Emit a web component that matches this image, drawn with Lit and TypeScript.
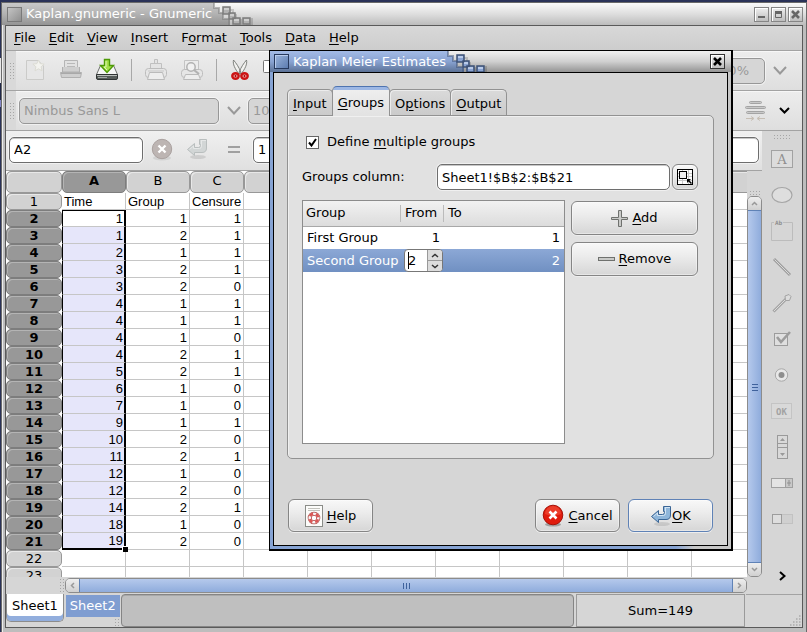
import { LitElement, html, css, svg } from "lit";
import { customElement, state } from "lit/decorators.js";
import { classMap } from "lit/directives/class-map.js";

const COLUMNS = ["A", "B", "C", "", "", "", "", "", "", "", ""];
const ROWS: string[][] = [
  ["Time", "Group", "Censure"],
  ["1", "1", "1"], ["1", "2", "1"], ["2", "1", "1"], ["3", "2", "1"],
  ["3", "2", "0"], ["4", "1", "1"], ["4", "1", "1"], ["4", "1", "0"],
  ["4", "2", "1"], ["5", "2", "1"], ["6", "1", "0"], ["7", "1", "0"],
  ["9", "1", "1"], ["10", "2", "0"], ["11", "2", "1"], ["12", "1", "0"],
  ["12", "2", "0"], ["14", "2", "1"], ["18", "1", "0"], ["19", "2", "0"],
  [], [],
];

const icon = (w: number, h: number, body: unknown) =>
  html`<svg class="icon" width=${w} height=${h} viewBox="0 0 ${w} ${h}" aria-hidden="true">${body}</svg>`;

const chevron = (dir: "up" | "down" | "left" | "right", w: number, h: number, color: string, stroke = 2) => {
  const d = {
    down: `M1 1L${w / 2} ${h - 1.5}L${w - 1} 1`,
    up: `M1 ${h - 1}L${w / 2} 1.5L${w - 1} ${h - 1}`,
    left: `M${w - 1} 1L1.5 ${h / 2}L${w - 1} ${h - 1}`,
    right: `M1 1L${w - 1.5} ${h / 2}L1 ${h - 1}`,
  }[dir];
  return icon(w, h, svg`<path d=${d} fill="none" stroke=${color} stroke-width=${stroke}/>`);
};

const newDoc = icon(24, 24, svg`
  <path d="M3.500 2.500H15L20.500 8V21.500H3.500Z" fill="#e6e6e6" stroke="#cbcbc9"/>
  <path d="M15.500 2l1.600 3.600 4 .5-3 2.700.9 4-3.500-2-3.500 2 .9-4-3-2.700 4-.5z" fill="#f3f3ef" stroke="#dcdcd4"/>`);
const openDoc = icon(24, 24, svg`
  <path d="M5.500 2.500H18.500V13H5.500Z" fill="#e2e2e2" stroke="#b5b5b5"/>
  <path d="M8 5.500h8M8 8.500h8M8 11.500h8" stroke="#b9b9b9"/>
  <path d="M3.500 9v5h17V9M1.500 14.500h21l-1 5h-19z" fill="#cfcfcf" stroke="#b0b0b0"/>
  <path d="M2 15.500h20" stroke="#a9a9a9"/>`);
const saveIcon = icon(24, 24, svg`
  <path d="M5.500 7.500H18.500L22.500 16.500H1.500Z" fill="#f5f5f5" stroke="#6c6f6c"/>
  <path d="M1.500 16.500H22.500V20q0 1.500-1.500 1.500H3q-1.500 0-1.500-1.500Z" fill="#565c5a" stroke="#2f3333"/>
  <path d="M2 17.500h20" stroke="#b9bdba"/>
  <path d="M3 19.500h9" stroke="#a4a8a6"/>
  <path d="M9.500 1.500h5v6h4L12 14.500 5.500 7.500h4z" fill="#a5e04a" stroke="#4e9a06" stroke-width="1.400"/>
  <path d="M11 3v6H9l3 3" fill="none" stroke="#dff7b4"/>`);
const printIcon = icon(24, 24, svg`
  <path d="M10.500 1.500h3v4h-3zM6.500 5.500h11v5h-11z" fill="#e4e4e4" stroke="#c0c0c0"/>
  <rect x="1.500" y="10.500" width="21" height="9" rx="3" fill="#e6e6e6" stroke="#bcbcbc"/>
  <path d="M5.500 14.500h13l2 7h-17z" fill="#ededed" stroke="#bababa"/>
  <path d="M4 13h16" stroke="#c8c8c8"/>`);
const previewIcon = icon(24, 24, svg`
  <path d="M4.500 2.500h14v9h-14z" fill="#ececec" stroke="#c4c4c4"/>
  <rect x="1.500" y="11.500" width="21" height="8" rx="3" fill="#e6e6e6" stroke="#bcbcbc"/>
  <path d="M5.500 16.500h13l2 5h-17z" fill="#ededed" stroke="#bababa"/>
  <circle cx="11" cy="9" r="4.200" fill="#f1f1f1" stroke="#b2b2b2" stroke-width="1.500"/>
  <path d="M14 12l5 4" stroke="#b2b2b2" stroke-width="2.200"/>`);
const cutIcon = icon(22, 24, svg`
  <path d="M4.500 2C3.500 6 6 11 10 16l2-1.500C10 9 7 5 4.500 2zM17.500 2c1 4-1.500 9-5.500 14l-2-1.500C12 9 15 5 17.500 2z" fill="#f2f2f0" stroke="#7c7f7b"/>
  <ellipse cx="6.500" cy="18" rx="3.200" ry="2.800" fill="#f3b5b5" stroke="#cc1414" stroke-width="2.400"/>
  <ellipse cx="15.500" cy="18" rx="3.200" ry="2.800" fill="#f3b5b5" stroke="#cc1414" stroke-width="2.400"/>
  <circle cx="6.500" cy="18" r="1" fill="#a40000"/><circle cx="15.500" cy="18" r="1" fill="#a40000"/>`);
const copyIcon = icon(22, 24, svg`<rect x=".5" y="2.500" width="13" height="12" rx="1" fill="#fff" stroke="#777"/><rect x="6.500" y="7.500" width="13" height="13" rx="1" fill="#fff" stroke="#777"/>`);
const mergeIcon = icon(22, 22, svg`
  <g fill="#c9c9c9" stroke="#a4a4a4"><rect x="4.500" y="1.500" width="12" height="2" rx="1"/><rect x=".5" y="6.500" width="20" height="2" rx="1"/><rect x="1.500" y="11.500" width="18" height="2" rx="1"/></g>
  <path d="M1 18.500h7M13 18.500h7M6 16.500l3 2-3 2M15 16.500l-3 2 3 2" fill="none" stroke="#c6beb4"/>`);
const rejectIcon = icon(22, 24, svg`
  <ellipse cx="11" cy="20" rx="9" ry="2.500" fill="#d2d2d2"/>
  <circle cx="11" cy="11" r="9.700" fill="#bdb5b3" stroke="#aaa19f"/>
  <path d="M7.500 7.500l7 7m0-7l-7 7" stroke="#fff" stroke-width="2.400"/>`);
const enterShape = (fill: string, stroke: string, shine: string) => svg`
  <ellipse cx="12" cy="19" rx="8" ry="2" fill="#000" opacity=".1"/>
  <path d="M1.500 11.500L8.500 5.500V9.500H12.500Q14.500 9.500 14.500 7.500V6.500H13.500V1.500H20.500V10Q20.500 14.500 16 14.500H8.500V17.500Z" fill=${fill} stroke=${stroke} stroke-linejoin="round"/>
  <path d="M3.500 11.500L7.500 8v2.500h6q2 0 2-2.500V3M15 2.500h5" fill="none" stroke=${shine}/>`;
const enterGrey = icon(24, 24, enterShape("#d2d6d6", "#b9bebe", "#e6e8e8"));
const enterBlue = icon(22, 22, enterShape("#8fb6da", "#3a6595", "#d3e4f3"));
const cancelRed = icon(22, 24, svg`
  <ellipse cx="11" cy="20.500" rx="8" ry="2" fill="#888" opacity=".7"/>
  <circle cx="11" cy="11" r="9.800" fill="#e01b0c" stroke="#a51208"/>
  <path d="M3 10a8 8 0 0 1 16 0q-8 3-16 0z" fill="#f4553f" opacity=".6"/>
  <path d="M7.500 7.500l7 7m0-7l-7 7" stroke="#fff" stroke-width="2.600"/>`);
const helpIcon = icon(18, 22, svg`
  <rect x=".5" y=".5" width="17" height="21" fill="#fcfcfa" stroke="#8a8c88"/>
  <path d="M3 3.500h12M3 5.500h12" stroke="#c2c2bc"/>
  <circle cx="9" cy="13" r="4.300" fill="#fff" stroke="#b04a48" stroke-width="4"/>
  <circle cx="9" cy="13" r="4.300" fill="none" stroke="#f5f3f3" stroke-width="2.600"/>
  <circle cx="9" cy="13" r="4.300" fill="none" stroke="#dc5654" stroke-width="2.600" stroke-dasharray="3.800 2.955" stroke-dashoffset="-1.480"/>`);
const plusIcon = icon(17, 17, svg`<path d="M7.500.5h3v7h6v2h-6v7h-3v-7h-7v-2h7z" fill="#c9cac8" stroke="#6f716e"/>`);
const minusIcon = icon(17, 6, svg`<rect x=".5" y="1.500" width="16" height="3" fill="#c9cac8" stroke="#6f716e"/>`);
const rangeIcon = icon(16, 16, svg`
  <rect width="16" height="16" fill="#fff"/>
  <path d="M0 4.500h16M0 7.500h16M0 11.500h16M5.500 0v16M11.500 0v16" stroke="#c9c9c9"/>
  <rect x=".5" y=".5" width="15" height="15" fill="none" stroke="#000"/>
  <rect x="2.500" y="2.500" width="7" height="7" fill="#f0f0f0" stroke="#000"/>
  <path d="M10 10h4L10 14z" fill="#000"/><path d="M11.500 11.500l3 3" stroke="#000" stroke-width="1.500"/>`);

const objectTools: [string, unknown][] = [
  ["Label", icon(24, 20, svg`<rect x="1.500" y="1.500" width="21" height="17" fill="#dcdcdc" stroke="#a2a2a2"/><text x="12" y="15" text-anchor="middle" font-family="DejaVu Serif, serif" font-size="13" fill="#8f8f8f">A</text>`)],
  ["Oval", icon(24, 20, svg`<ellipse cx="12" cy="10" rx="10" ry="7.500" fill="#dedede" stroke="#a6a6a6" stroke-width="1.200"/>`)],
  ["Frame", icon(24, 24, svg`<path d="M4 3.500H1.500V21.500H22.500V3.500H13" fill="none" stroke="#bcbcbc"/><text x="5" y="6" font-family="DejaVu Sans Mono, monospace" font-size="6" font-weight="bold" fill="#909090">Ab</text>`)],
  ["Line", icon(24, 20, svg`<path d="M4 2L20 18" stroke="#9e9e9e" stroke-width="3"/><path d="M4.500 2.500L19.500 17.500" stroke="#d9d9d9"/>`)],
  ["Arrow", icon(24, 20, svg`<path d="M3.500 18.500L17 5" stroke="#a4a4a4" stroke-width="3"/><path d="M4 18L17 5" stroke="#dadada"/><path d="M15 3l4-1.500 2 2-1.500 4h-4z" fill="#dcdcdc" stroke="#a4a4a4"/>`)],
  ["Checkbox", icon(24, 20, svg`<rect x="4.500" y="4.500" width="13" height="12" fill="#dfdfdf" stroke="#9c9c9c"/><path d="M7 8l4 5 9-10" fill="none" stroke="#9c9c9c" stroke-width="2.600"/>`)],
  ["Radio button", icon(24, 20, svg`<circle cx="11.500" cy="10" r="6.200" fill="#e8e8e8" stroke="#a8a8a8"/><circle cx="11.500" cy="10" r="3" fill="#8e8e8e"/>`)],
  ["Button", icon(24, 20, svg`<rect x="1.500" y="2.500" width="20" height="15" fill="#d9d9d9" stroke="#c4c4c4"/><text x="11.500" y="14" text-anchor="middle" font-family="DejaVu Sans Mono, monospace" font-size="9" font-weight="bold" fill="#a2a2a2">OK</text>`)],
  ["Scrollbar", icon(24, 26, svg`<rect x="7.500" y="1.500" width="10" height="23" fill="#d9d9d9" stroke="#9a9a9a"/><path d="M7 9.500h11M7 13.500h11" stroke="#9a9a9a"/><path d="M10 7h5l-2.500-3zM10 19h5l-2.500 3z" fill="#9a9a9a"/>`)],
  ["Spin button", icon(24, 20, svg`<rect x="1.500" y="5.500" width="21" height="9" fill="#e4e4e4" stroke="#a0a0a0"/><rect x="15.500" y="5.500" width="7" height="9" fill="#c8c8c8" stroke="#a0a0a0"/><path d="M17 10h4M19 7v6" stroke="#909090"/>`)],
  ["Slider", icon(24, 20, svg`<rect x="2.500" y="5.500" width="20" height="9" fill="#d0d0d0" stroke="#c2c2c2"/><rect x="2.500" y="5.500" width="9" height="9" fill="#dedede" stroke="#9c9c9c"/>`)],
];

/* Stair-step ornament where the caption part of a title bar breaks up into blocks. */
const steps = (h: number, top: string, middle: string, bottom: string, edge: string, shine: string) => html`
  <svg class="steps" width="42" height=${h} viewBox="0 0 42 ${h}" aria-hidden="true">
    <defs><linearGradient id="caption" gradientUnits="userSpaceOnUse" x1="0" y1="0" x2="0" y2=${h}>
      <stop offset="0" stop-color=${top}/><stop offset=".5" stop-color=${middle}/><stop offset="1" stop-color=${bottom}/>
    </linearGradient></defs>
    <path d="M0 0H2V5H7V10H11V16H18V${h}H0Z" fill="url(#caption)"/>
    <path d="M2 0V5H7V10H11V16H17V${h}" fill="none" stroke=${edge} stroke-width="2" opacity=".5"/>
    <path d="M16 7h5v5h3v5h5v5h-6M34 22h6v-7" fill="none" stroke="#000" stroke-width="2" opacity=".15"/>
    <g fill=${middle} stroke=${edge} stroke-width="1.500">
      <path d="M11 4h7v7h-7zM17 10h6v6h-6zM21 15h7v6h-7zM31 15h7v6h-7z"/>
    </g>
    <path d="M12 6h5M18 12h4M22 17h5M32 17h5" stroke=${shine} stroke-width="2" opacity=".8"/>
  </svg>`;

const base = css`
  * { box-sizing: border-box; }
  button, input {
    font: inherit; color: inherit; margin: 0; padding: 0; border: 0; background: none;
    border-radius: 0; outline: 0; min-width: 0;
  }
  button { display: flex; align-items: center; justify-content: center; }
  .icon { display: block; flex: none; }
  u { text-underline-offset: 2px; text-decoration-thickness: 1px; }
  .entry {
    height: 26px; padding: 0 4px; background: #fff; border: 1px solid #6e6e6e; border-radius: 5px;
    box-shadow: inset 0 1px 0 #c8c8c8, 0 0 0 1px rgba(255, 255, 255, .5);
  }
  .win-btn {
    width: 15px; height: 15px; border: 1px solid #858585; box-shadow: inset 1px 1px 0 #fff;
    background: linear-gradient(#eee, #bdbdbd);
  }
`;

@customElement("kaplan-meier-dialog")
export class KaplanMeierDialog extends LitElement {
  static styles = [base, css`
    :host {
      box-sizing: border-box; display: flex; flex-direction: column; background: #d6d6d6;
      border: 1px solid #000; border-right-width: 2px; border-bottom-width: 2px;
    }
    .title {
      display: flex; align-items: center; height: 21px; padding: 0 6px 0 4px;
      background: linear-gradient(#f0f0f0, #d0d0d0 50%, #949494);
    }
    .name {
      display: flex; align-items: center; gap: 4px; height: 21px; margin-left: -4px; padding-left: 4px; color: #fff;
      background: linear-gradient(#a3bbe6, #89a3d2 50%, #5c7296);
    }
    .menu {
      width: 15px; height: 15px; border: 1px solid #26395d; background: linear-gradient(135deg, #9bb4dc, #5c7cb0);
      box-shadow: inset 1px 1px 0 #b9cced;
    }
    .steps { flex: none; }
    .close { margin-left: auto; border-color: #333; }
    .frame { flex: 1; display: flex; padding: 0 3px 3px; background: linear-gradient(90deg, #86a3d3 88%, #c6c6c6 92%); }
    .body {
      flex: 1; display: flex; flex-direction: column; min-width: 0; padding: 13px;
      border: 1px solid #000; background: #d6d6d6;
    }
    .tabs { display: flex; align-items: flex-end; height: 29px; }
    .tab {
      height: 26px; padding: 2px 5px 0; border: 1px solid #929292; border-bottom: 0; margin-right: -1px;
      border-radius: 5px 5px 0 0; background: linear-gradient(#dadada, #cbcbcb); box-shadow: inset 1px 1px 0 #ececec;
    }
    .tab.on {
      position: relative; height: 30px; margin-bottom: -1px; border-top: 1px solid #4f74b0;
      background: linear-gradient(#9db7e4 3px, #eee 3px, #e2e2e2); box-shadow: none;
    }
    .page {
      flex: 1; display: flex; flex-direction: column; padding: 15px 15px 14px 14px;
      background: #e1e1e1; border: 1px solid #929292; border-radius: 0 5px 5px 5px; box-shadow: inset 1px 1px 0 #f0f0f0;
    }
    .check { display: flex; align-items: center; gap: 8px; height: 22px; padding-left: 4px; }
    .check input { appearance: none; width: 13px; height: 13px; border: 1px solid #666; background: #fff; }
    .check input:not(:checked) + .icon { display: none; }
    .box { position: relative; display: flex; }
    .box .icon { position: absolute; left: 2px; top: 2px; pointer-events: none; }
    .column { display: flex; align-items: center; margin-top: 11px; height: 26px; }
    .column label { width: 135px; }
    .column .entry { flex: 1; }
    .btn {
      gap: 4px; border: 1px solid #858585; border-radius: 6px; background: linear-gradient(#f8f8f8, #ececec 40%, #d6d6d6);
      box-shadow: inset 0 0 0 1px rgba(255, 255, 255, .4), 0 1px 0 #eee;
    }
    .pick { width: 26px; height: 26px; margin-left: 2px; }
    .lower { flex: 1; display: flex; gap: 6px; margin-top: 10px; }
    .list { flex: 1; background: #fff; border: 1px solid #8c8c8c; }
    table { width: 100%; border-collapse: collapse; table-layout: fixed; }
    th, td { padding: 0 4px; font-weight: normal; text-align: left; white-space: nowrap; }
    th {
      height: 25px; border-bottom: 1px solid #a8a8a8;
      background: linear-gradient(#bbb, #bbb) right 50% / 1px 17px no-repeat, linear-gradient(#f2f2f2, #dcdcdc);
    }
    th:first-child { padding-left: 3px; }
    th:last-child { background: linear-gradient(#f2f2f2, #dcdcdc); }
    td { height: 23px; }
    .num { text-align: right; }
    .w-group { width: 98px; } .w-from { width: 43px; }
    .sel { color: #fff; background: linear-gradient(#8ca8d6, #7090c2); }
    td.edit { padding: 0 1px 0 3px; }
    .spin { display: flex; height: 23px; color: #000; background: #fff; border: 1px solid #777; border-radius: 4px; overflow: hidden; }
    .spin input { flex: 1; width: 20px; margin-left: 3px; background: linear-gradient(#000, #000) 0 50% / 1px 17px no-repeat; }
    .arrows { display: flex; flex-direction: column; width: 15px; border-left: 1px solid #999; background: #dcdcdc; }
    .arrows button { flex: 1; }
    .arrows button + button { border-top: 1px solid #999; }
    .side { display: flex; flex-direction: column; gap: 7px; width: 127px; padding-top: 1px; }
    .side .btn { height: 34px; }
    .actions { display: flex; gap: 8px; margin-top: 40px; padding: 0 1px; }
    .actions .btn { width: 85px; height: 33px; }
    .actions .help { margin-right: auto; }
    .actions .ok { border-color: #5f82b6; gap: 0; }
  `];

  @state() private tab = "Groups";

  render() {
    const tabs: [string, unknown][] = [
      ["Input", html`<span><u>I</u>nput</span>`], ["Groups", html`<span><u>G</u>roups</span>`],
      ["Options", html`<span>O<u>p</u>tions</span>`], ["Output", html`<span><u>O</u>utput</span>`],
    ];
    return html`
      <div class="title">
        <div class="name"><button class="menu" aria-label="Window menu"></button>Kaplan Meier Estimates</div>
        ${steps(21, "#a3bbe6", "#89a3d2", "#5c7296", "#3d5176", "#c5d5ef")}
        <button class="win-btn close" aria-label="Close">${icon(9, 9, svg`<path d="M1 1l7 7m0-7l-7 7" stroke="#000" stroke-width="2.600"/>`)}</button>
      </div>
      <div class="frame"><div class="body">
        <div class="tabs" role="tablist">
          ${tabs.map(([id, text]) => html`<button role="tab" class=${classMap({ tab: true, on: this.tab === id })}
            aria-selected=${this.tab === id} @click=${() => (this.tab = id)}>${text}</button>`)}
        </div>
        <div class="page" role="tabpanel">
          <label class="check">
            <span class="box"><input type="checkbox" checked />${icon(9, 9, svg`<path d="M1 4.500L3.500 7.500 8 1" fill="none" stroke="#000" stroke-width="2"/>`)}</span>
            <span>Define <u>m</u>ultiple groups</span>
          </label>
          <div class="column">
            <label for="range">Groups column:</label>
            <input class="entry" id="range" .value=${"Sheet1!$B$2:$B$21"} />
            <button class="btn pick" aria-label="Pick range">${rangeIcon}</button>
          </div>
          <div class="lower">
            <div class="list">
              <table>
                <thead><tr><th class="w-group">Group</th><th class="w-from">From</th><th>To</th></tr></thead>
                <tbody>
                  <tr><td>First Group</td><td class="num">1</td><td class="num">1</td></tr>
                  <tr class="sel"><td>Second Group</td>
                    <td class="edit"><div class="spin"><input aria-label="From" .value=${"2"} />
                      <div class="arrows"><button aria-label="Increase">${chevron("up", 8, 5, "#333", 1.5)}</button><button aria-label="Decrease">${chevron("down", 8, 5, "#333", 1.5)}</button></div></div></td>
                    <td class="num">2</td></tr>
                </tbody>
              </table>
            </div>
            <div class="side">
              <button class="btn">${plusIcon}<span><u>A</u>dd</span></button>
              <button class="btn">${minusIcon}<span><u>R</u>emove</span></button>
            </div>
          </div>
        </div>
        <div class="actions">
          <button class="btn help">${helpIcon}<span><u>H</u>elp</span></button>
          <button class="btn">${cancelRed}<span><u>C</u>ancel</span></button>
          <button class="btn ok">${enterBlue}<span><u>O</u>K</span></button>
        </div>
      </div></div>`;
  }
}

@customElement("app-root")
export class AppRoot extends LitElement {
  static styles = [base, css`
    :host {
      box-sizing: border-box; display: block; position: relative; height: 100vh; min-height: 560px; padding: 2px 0 0 1px; overflow: hidden;
      font: 13px/16px "DejaVu Sans", sans-serif; color: #000;
      background: linear-gradient(#2a3258 58px, #e8e8e8 58px 83px, #202848 83px 100px, #8688c8 100px 107px, #2a3258 107px);
    }
    .window {
      display: flex; flex-direction: column; height: 100%; background: #d6d6d6;
      border: 1px solid #6a6a6a; border-bottom: 0;
    }
    .title {
      flex: none; display: flex; align-items: center; height: 22px; padding-right: 3px;
      background: linear-gradient(#fafafa, #dedede 50%, #bcbcbc);
    }
    .name {
      display: flex; align-items: center; gap: 4px; height: 22px; padding-left: 5px; color: #fff;
      background: linear-gradient(#c9c9c9, #b2b2b2 50%, #949494);
    }
    .menu-btn { width: 15px; height: 15px; border: 1px solid #7a7a7a; background: linear-gradient(135deg, #c4c4c4, #8f8f8f); }
    .steps { flex: none; }
    .win-btns { display: flex; gap: 2px; margin-left: auto; }
    .frame { flex: 1; min-height: 0; display: flex; padding: 0 3px 4px; background: #bdbdbd; box-shadow: inset 1px 0 0 #eee; }
    .content { flex: 1; min-width: 0; display: flex; flex-direction: column; background: #d6d6d6; border: 1px solid #5a5a5a; }
    .menubar { flex: none; display: flex; align-items: center; height: 25px; padding-left: 2px; background: linear-gradient(#d8d8d8, #cdcdcd); border-bottom: 1px solid #a3a3a3; }
    .menubar button { height: 24px; padding: 0 7px 0 6px; }
    .toolbar { flex: none; display: flex; align-items: center; height: 40px; background: linear-gradient(#ededed, #dedede); border-bottom: 1px solid #a3a3a3; box-shadow: inset 0 1px 0 #f7f7f7; }
    .dots { background: radial-gradient(circle, #a6a6a6 1px, transparent 1px) 0 0 / 3px 3px; }
    .grip { width: 10px; height: 100%; background: #d9d9d9; display: flex; align-items: center; justify-content: center; }
    .grip .dots { width: 5px; height: 18px; }
    .tools { display: flex; align-items: center; gap: 12px; padding: 0 0 2px 7px; }
    .sep { width: 1px; height: 22px; background: #a8a8a8; }
    .entry.off { color: #999; background: #d6d6d6; border-color: #979797; box-shadow: 0 0 0 1px rgba(255, 255, 255, .5); }
    .drop { width: 29px; height: 26px; }
    .zoom-drop { margin-right: 8px; }
    .font { width: 200px; margin-left: 3px; }
    .size { width: 60px; }
    .zoom { width: 68px; margin-left: auto; text-align: right; padding-right: 15px; }
    .merge { margin-left: auto; }
    .more { width: 34px; height: 26px; margin-right: 1px; }
    .work { flex: 1; min-height: 0; display: flex; }
    .main { flex: 1; min-width: 0; display: flex; flex-direction: column; }
    .formula { flex: none; display: flex; align-items: center; height: 40px; padding: 0 3px 2px; background: linear-gradient(#f0f0f0, #e0e0e0); border-bottom: 1px solid #a3a3a3; }
    .cellref { width: 134px; margin-right: 8px; }
    .formula button { margin-right: 13px; }
    .formula .eq { width: 14px; margin: 0 12px 0 4px; }
    .value { flex: 1; }
    .scroller { flex: 1; min-height: 0; display: flex; }
    .sheet { flex: 1; min-width: 0; overflow: hidden; background: #fff; }
    .grid { width: 750px; border-collapse: separate; border-spacing: 0; table-layout: fixed; }
    .grid th {
      height: 17px; padding: 0; font-weight: normal; background: #d2d2d2; border: 1px solid #989898; border-radius: 5px;
      box-shadow: inset 1px 1px 0 #e8e8e8; line-height: 14px;
    }
    .grid thead th { height: 22px; padding-bottom: 2px; }
    .grid th.on { font-weight: bold; background: #989898; border-color: #7d7d7d; box-shadow: inset 1px 1px 0 #b4b4b4; }
    .grid td {
      height: 17px; padding: 0 2px; border-right: 1px solid #c6c6c6; border-bottom: 1px solid #c6c6c6;
      font: 13px/15px "Liberation Sans", Arial, sans-serif; text-align: right; white-space: nowrap; overflow: hidden;
    }
    .grid td.head { text-align: left; }
    .grid td.picked { background: #e6e6fa; border-right: 2px solid #000; border-left: 1px solid #000; padding-right: 1px; }
    .grid td.first { background: #fff; border-top: 1px solid #000; line-height: 14px; }
    .grid td.last { position: relative; overflow: visible; border-bottom: 2px solid #000; line-height: 14px; }
    /* Fill handle on the corner of the selection. */
    .grid td.last::after { content: ""; position: absolute; right: -4px; bottom: -4px; width: 5px; height: 5px; background: #000; border: 1px solid #fff; border-width: 1px 0 0 1px; }
    .w-row { width: 56px; } .w-col { width: 64px; } .w-c { width: 54px; }
    .vside { flex: none; display: flex; flex-direction: column; width: 15px; background: #d6d6d6; }
    .vside > .dots { height: 6px; margin: 19px 0 0 2px; }
    .bar { flex: 1; min-height: 0; min-width: 0; display: flex; border: 1px solid #8c8c8c; border-radius: 5px; background: #dadada; overflow: hidden; }
    .vbar { flex-direction: column; }
    .bar button { flex: none; width: 13px; height: 13px; background: linear-gradient(#eee, #d0d0d0); }
    .thumb { flex: 1; display: flex; align-items: center; justify-content: center; background: linear-gradient(90deg, #b5c9ec, #8facdc); border: 1px solid #5f82b6; border-width: 1px 0; }
    .hbar .thumb { background: linear-gradient(#b5c9ec, #8facdc); border-width: 0 1px; }
    .hside { flex: none; display: flex; height: 17px; padding: 1px 15px 1px 53px; }
    .hside > .dots { width: 5px; margin-right: 1px; }
    .status { flex: none; display: flex; height: 33px; }
    .sheet-tab { height: 28px; padding: 0 5px 4px; background: #fff; border: 1px solid #8c8c8c; border-top: 0; border-radius: 0 0 5px 5px; box-shadow: inset 0 -5px 0 #92aedd; }
    .sheet-tab.second { height: 22px; margin: 1px 0 0 2px; padding: 0 4px; color: #fff; background: #7f9dd1; border: 0; border-radius: 0; box-shadow: none; }
    .second-wrap { display: flex; flex-direction: column; justify-content: space-between; align-items: flex-end; }
    .second-wrap .dots { width: 6px; height: 9px; }
    .progress { flex: 1; margin-left: 1px; background: #bfbfbf; border: 1px solid #858585; border-radius: 4px; box-shadow: inset 0 1px 0 #a8a8a8; }
    .sum { width: 169px; margin-left: 2px; display: flex; align-items: center; justify-content: center; border: 1px solid #9a9a9a; }
    .corner { width: 56px; margin-left: 1px; border-top: 1px solid #a3a3a3; display: flex; align-items: flex-end; justify-content: flex-end; }
    .objects { flex: none; display: flex; flex-direction: column; align-items: center; width: 40px; padding-top: 3px; }
    .objects > .dots { width: 18px; height: 5px; }
    .object-list { display: flex; flex-direction: column; align-items: center; gap: 16px; padding-top: 10px; flex: 1; }
    .object-list button { height: 20px; }
    .objects .next { height: 36px; }
    /* The dialog floats over the spreadsheet like a window on a desktop. */
    kaplan-meier-dialog { position: absolute; left: 269px; top: 50px; width: 464px; height: 501px; }
  `];

  @state() private sheetTab = 0;

  private cell(row: number, col: number) {
    const text = ROWS[row][col] ?? "";
    const picked = col === 0 && row >= 1 && row <= 20;
    return html`<td class=${classMap({ head: row === 0, picked, first: picked && row === 1, last: picked && row === 20 })}>${text}</td>`;
  }

  render() {
    const menus: [string, string, string][] = [["", "F", "ile"], ["", "E", "dit"], ["", "V", "iew"], ["", "I", "nsert"], ["F", "o", "rmat"], ["", "T", "ools"], ["", "D", "ata"], ["", "H", "elp"]];
    return html`
      <div class="window">
        <div class="title">
          <div class="name"><button class="menu-btn" aria-label="Window menu"></button>Kaplan.gnumeric - Gnumeric</div>
          ${steps(22, "#c9c9c9", "#b2b2b2", "#949494", "#7c7c7c", "#d6d6d6")}
          <div class="win-btns">
            <button class="win-btn" aria-label="Minimise">${icon(9, 9, svg`<path d="M1 7h7" stroke="#666" stroke-width="2"/>`)}</button>
            <button class="win-btn" aria-label="Maximise">${icon(9, 9, svg`<path d="M1.500 2v5.500h6V2" fill="none" stroke="#666"/><path d="M1 2.500h7" stroke="#666" stroke-width="3"/>`)}</button>
            <button class="win-btn" aria-label="Close">${icon(9, 9, svg`<path d="M1 1l7 7m0-7l-7 7" stroke="#666" stroke-width="2.600"/>`)}</button>
          </div>
        </div>
        <div class="frame"><div class="content">
          <nav class="menubar">${menus.map(([a, b, c]) => html`<button><span>${a}<u>${b}</u>${c}</span></button>`)}</nav>
          <div class="toolbar">
            <div class="grip"><div class="dots"></div></div>
            <div class="tools">
              <button aria-label="New">${newDoc}</button><button aria-label="Open">${openDoc}</button><button aria-label="Save">${saveIcon}</button>
              <div class="sep"></div>
              <button aria-label="Print">${printIcon}</button><button aria-label="Print preview">${previewIcon}</button>
              <div class="sep"></div>
              <button aria-label="Cut">${cutIcon}</button><button aria-label="Copy">${copyIcon}</button>
            </div>
            <input class="entry off zoom" aria-label="Zoom" disabled .value=${"100%"} />
            <button class="drop zoom-drop" aria-label="Choose zoom">${chevron("down", 14, 9, "#999")}</button>
          </div>
          <div class="toolbar">
            <div class="grip"><div class="dots"></div></div>
            <input class="entry off font" aria-label="Font" disabled .value=${"Nimbus Sans L"} />
            <button class="drop" aria-label="Choose font">${chevron("down", 14, 9, "#999")}</button>
            <input class="entry off size" aria-label="Font size" disabled .value=${"10"} />
            <button class="merge" aria-label="Merge cells">${mergeIcon}</button>
            <button class="more" aria-label="More tools">${chevron("down", 11, 7, "#000")}</button>
          </div>
          <div class="work">
            <div class="main">
              <div class="formula">
                <input class="entry cellref" aria-label="Cell" .value=${"A2"} />
                <button aria-label="Cancel edit">${rejectIcon}</button>
                <button aria-label="Accept edit">${enterGrey}</button>
                <button class="eq" aria-label="Insert function">${icon(14, 9, svg`<path d="M1 2h12M1 7h12" stroke="#a0a0a0" stroke-width="2"/>`)}</button>
                <input class="entry value" aria-label="Cell value" .value=${"1"} />
              </div>
              <div class="scroller">
                <div class="sheet">
                  <table class="grid">
                    <thead><tr><th class="w-row"></th>${COLUMNS.map((c) => html`<th class=${classMap({ "w-col": c !== "C", "w-c": c === "C", on: c === "A" })}>${c}</th>`)}</tr></thead>
                    <tbody>${ROWS.map((_, r) => html`<tr><th class=${classMap({ on: r >= 1 && r <= 20 })}>${r + 1}</th>${COLUMNS.map((__, c) => this.cell(r, c))}</tr>`)}</tbody>
                  </table>
                </div>
                <div class="vside">
                  <div class="dots"></div>
                  <div class="bar vbar">
                    <button aria-label="Scroll up">${chevron("up", 7, 5, "#999", 1.5)}</button>
                    <div class="thumb">${icon(6, 8, svg`<path d="M0 1.500h6M0 4.500h6M0 7.500h6" stroke="#3f629c"/>`)}</div>
                    <button aria-label="Scroll down">${chevron("down", 7, 5, "#999", 1.5)}</button>
                  </div>
                </div>
              </div>
              <div class="hside">
                <div class="dots"></div>
                <div class="bar hbar">
                  <button aria-label="Scroll left">${chevron("left", 5, 7, "#999", 1.5)}</button>
                  <div class="thumb">${icon(8, 6, svg`<path d="M1.500 0v6M4.500 0v6M7.500 0v6" stroke="#3f629c"/>`)}</div>
                  <button aria-label="Scroll right">${chevron("right", 5, 7, "#999", 1.5)}</button>
                </div>
              </div>
            </div>
            <div class="objects" role="toolbar" aria-label="Objects">
              <div class="dots"></div>
              <div class="object-list">${objectTools.map(([name, pic]) => html`<button aria-label=${name}>${pic}</button>`)}</div>
              <button class="next" aria-label="More objects">${chevron("right", 7, 10, "#000")}</button>
            </div>
          </div>
          <div class="status">
            <button class="sheet-tab" @click=${() => (this.sheetTab = 0)}>Sheet1</button>
            <div class="second-wrap"><button class="sheet-tab second" @click=${() => (this.sheetTab = 1)}>Sheet2</button><div class="dots"></div></div>
            <div class="progress"></div>
            <div class="sum">Sum=149</div>
            <div class="corner">${icon(13, 13, svg`<path d="M1 11h2M4 11h2M4 8h2M7 11h2M7 8h2M7 5h2M10 11h2M10 8h2M10 5h2M10 2h2" stroke="#aaa" stroke-width="1.500" stroke-dasharray="1.500 1"/>`)}</div>
          </div>
        </div></div>
      </div>
      <kaplan-meier-dialog role="dialog" aria-label="Kaplan Meier Estimates"></kaplan-meier-dialog>`;
  }
}
